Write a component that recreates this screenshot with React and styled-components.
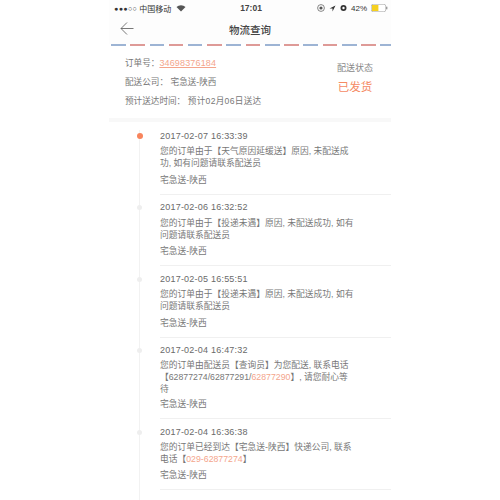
import React from 'react';
import styled, { createGlobalStyle } from 'styled-components';

const GlobalStyle = createGlobalStyle`
    html, body {
        margin: 0;
        padding: 0;
        background: #fff;
    }
    body {
        font-family: "Liberation Sans", "Noto Sans CJK SC", sans-serif;
        color: #666;
    }
`;

const Phone = styled.div`
    width: 282px;
    height: 500px;
    margin: 0 auto;
    overflow: hidden;
    background: #fff;
`;

const StatusBar = styled.div`
    height: 16px;
    padding: 0 3px 0 5px;
    display: grid;
    grid-template-columns: 1fr auto 1fr;
    align-items: center;
    font-size: 8px;
    color: #333;
    background: #fdfdfd;
`;

const StatusSide = styled.div`
    display: flex;
    align-items: center;
    gap: ${p => p.$gap || 3}px;
    justify-content: ${p => (p.$end ? 'flex-end' : 'flex-start')};
`;

const Clock = styled.span`
    font-weight: bold;
    font-size: 8.5px;
    color: #444;
`;

const Signal = styled.span`
    font-size: 7px;
    letter-spacing: 0.4px;
    margin-right: -1px;
`;

const Wifi = styled.svg`
    margin-left: 2px;
`;

const NavBar = styled.div`
    height: 26px;
    padding-bottom: 2px;
    position: relative;
    display: flex;
    align-items: center;
    justify-content: center;
    background: #fdfdfd;
`;

const BackButton = styled.svg`
    position: absolute;
    left: 11px;
    top: 6px;
`;

const Title = styled.div`
    font-size: 10.5px;
    font-weight: 500;
    color: #444;
`;

const Stripe = styled.div`
    height: 2px;
    margin-left: 2px;
    background: repeating-linear-gradient(
        90deg,
        #9db4d4 0 14.5px,
        #fff 14.5px 19.25px,
        #de9a97 19.25px 33.75px,
        #fff 33.75px 38.5px
    );
`;

const Info = styled.div`
    height: 72px;
    padding: 0 18px 0 16px;
    display: flex;
    justify-content: space-between;
`;

const InfoList = styled.div`
    padding-top: 8px;
    display: flex;
    flex-direction: column;
`;

const InfoRow = styled.div`
    height: 19px;
    line-height: 19px;
    font-size: 8.6px;
    color: #777;
    white-space: nowrap;
`;

const InfoValue = styled.span`
    margin-left: 2.6px;
    letter-spacing: ${p => (p.$wide ? 0.3 : 0)}px;
`;

const OrderLink = styled.span`
    color: #f4a58c;
    text-decoration: underline;
    font-size: 9px;
    letter-spacing: 0.15px;
`;

const StateBox = styled.div`
    padding-top: 15px;
    display: flex;
    flex-direction: column;
    align-items: center;
    gap: 6px;
`;

const StateLabel = styled.div`
    font-size: 9px;
    color: #888;
`;

const StateValue = styled.div`
    font-size: 11.5px;
    line-height: 14px;
    color: #f58a64;
`;

const Band = styled.div`
    height: 4px;
    background: #f8f8f8;
`;

const Timeline = styled.div`
    padding: 8px 0 0 51px;
`;

const Event = styled.div`
    position: relative;
    padding: 0 0 8px;
    margin-bottom: 6.5px;
    border-bottom: 1px solid #f0f0f0;

    &::before {
        content: '';
        position: absolute;
        left: -21px;
        top: 0;
        bottom: -7.5px;
        width: 1px;
        background: #f2f2f2;
    }
`;

const Dot = styled.span`
    position: absolute;
    left: ${p => (p.$active ? -23.5 : -23)}px;
    top: ${p => (p.$active ? 3 : 4)}px;
    width: ${p => (p.$active ? 6 : 5)}px;
    height: ${p => (p.$active ? 6 : 5)}px;
    border-radius: 50%;
    background: ${p => (p.$active ? '#f8845c' : '#eeeeee')};
    z-index: 1;
`;

const Time = styled.div`
    font-size: 9px;
    line-height: 12px;
    letter-spacing: 0.22px;
    color: #6a6a6a;
`;

const Desc = styled.div`
    margin-top: 3.3px;
    font-size: 8.75px;
    line-height: 12px;
    color: #777;
    white-space: nowrap;
`;

const Phones = styled.span`
    color: #f4a58c;
`;

const Company = styled.div`
    margin-top: ${p => (p.$tight ? 2.6 : 4.6)}px;
    font-size: 8.75px;
    line-height: 12px;
    color: #777;
`;

const events = [
    {
        time: '2017-02-07 16:33:39',
        lines: ['您的订单由于【天气原因延缓送】原因, 未配送成', '功, 如有问题请联系配送员'],
        active: true,
    },
    {
        time: '2017-02-06 16:32:52',
        lines: ['您的订单由于【投递未遇】原因, 未配送成功, 如有', '问题请联系配送员'],
    },
    {
        time: '2017-02-05 16:55:51',
        lines: ['您的订单由于【投递未遇】原因, 未配送成功, 如有', '问题请联系配送员'],
    },
    {
        time: '2017-02-04 16:47:32',
        lines: [
            '您的订单由配送员【查询员】为您配送, 联系电话',
            <>【62877274/62877291/<Phones>62877290</Phones>】, 请您耐心等</>,
            '待',
        ],
        tight: true,
    },
    {
        time: '2017-02-04 16:36:38',
        lines: ['您的订单已经到达【宅急送-陕西】快递公司, 联系', <>电话【<Phones>029-62877274</Phones>】</>],
    },
    {
        time: '2017-02-04 08:30:00',
        lines: ['您的订单已经到达【宅急送-陕西】快递公司'],
    },
];

const App = () => {
    return (
        <React.Fragment>
            <GlobalStyle />
            <Phone>
                <StatusBar>
                    <StatusSide>
                        <Signal>●●●○○</Signal>
                        <span>中国移动</span>
                        <Wifi width="10" height="8" viewBox="0 0 10 8">
                            <path d="M5 7.5 0.5 3a6.4 6.4 0 0 1 9 0Z" fill="#555" />
                        </Wifi>
                    </StatusSide>
                    <Clock>17:01</Clock>
                    <StatusSide $end $gap={4}>
                        <svg width="8" height="8" viewBox="0 0 8 8">
                            <circle cx="4" cy="4" r="3.4" fill="none" stroke="#555" strokeWidth="0.7" />
                            <circle cx="4" cy="4" r="1.6" fill="#555" />
                        </svg>
                        <svg width="7" height="7" viewBox="0 0 7 7">
                            <path d="M6.5 0.5 0.5 3.4h3v3Z" fill="#333" />
                        </svg>
                        <svg width="7" height="8" viewBox="0 0 7 8">
                            <circle cx="3.5" cy="4" r="3" fill="#333" />
                            <circle cx="3.5" cy="4" r="1.2" fill="#fff" />
                        </svg>
                        <span>42%</span>
                        <svg width="17" height="8" viewBox="0 0 17 8">
                            <rect x="0.3" y="0.3" width="14.4" height="7.4" rx="1.8" fill="#fff" stroke="#999" strokeWidth="0.6" />
                            <rect x="1" y="1" width="6.4" height="6" fill="#f5d020" />
                            <rect x="15.3" y="2.7" width="1" height="2.6" fill="#777" />
                        </svg>
                    </StatusSide>
                </StatusBar>
                <NavBar>
                    <BackButton width="14" height="13" viewBox="0 0 14 13">
                        <path d="M13.5 6.5H1M7 0.5 1 6.5l6 6" fill="none" stroke="#555" strokeWidth="0.8" />
                    </BackButton>
                    <Title>物流查询</Title>
                </NavBar>
                <Stripe />
                <Info>
                    <InfoList>
                        <InfoRow>订单号：<OrderLink>34698376184</OrderLink></InfoRow>
                        <InfoRow>配送公司：<InfoValue>宅急送-陕西</InfoValue></InfoRow>
                        <InfoRow>预计送达时间：<InfoValue $wide>预计02月06日送达</InfoValue></InfoRow>
                    </InfoList>
                    <StateBox>
                        <StateLabel>配送状态</StateLabel>
                        <StateValue>已发货</StateValue>
                    </StateBox>
                </Info>
                <Band />
                <Timeline>
                    {events.map((item) => (
                        <Event key={item.time}>
                            <Dot $active={item.active} />
                            <Time>{item.time}</Time>
                            <Desc>
                                {item.lines.map((line, i) => (
                                    <div key={i}>{line}</div>
                                ))}
                            </Desc>
                            <Company $tight={item.tight}>宅急送-陕西</Company>
                        </Event>
                    ))}
                </Timeline>
            </Phone>
        </React.Fragment>
    );
};

export default App;
